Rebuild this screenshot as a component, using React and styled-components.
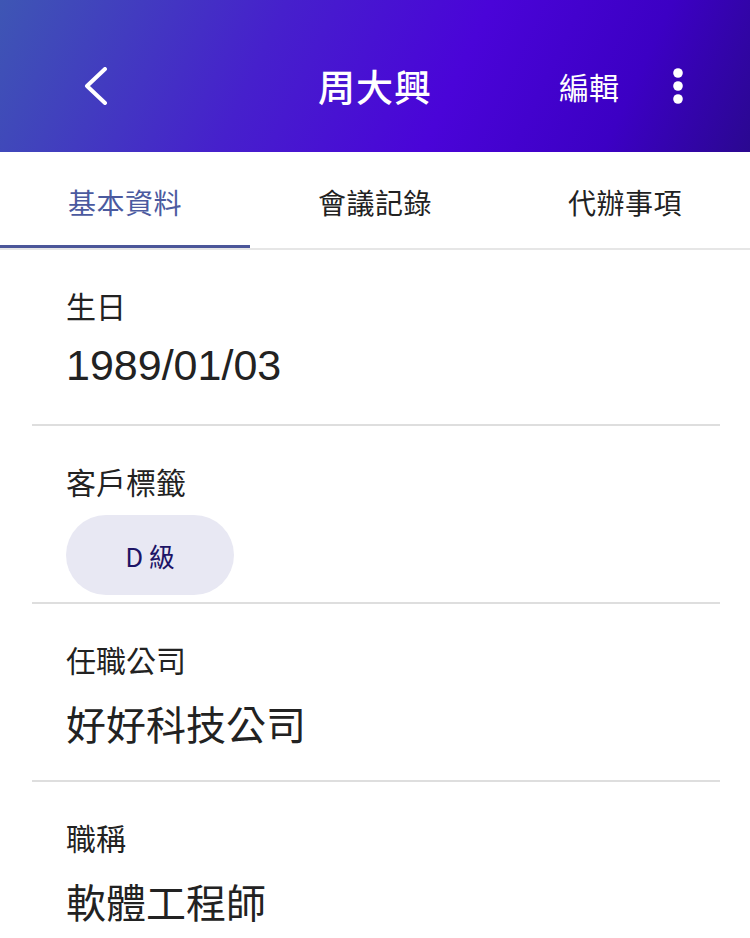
import React from "react";
import styled, { createGlobalStyle } from "styled-components";

const GlobalStyle = createGlobalStyle`
    body {
        margin: 0;
        background: #ffffff;
        font-family: "Noto Sans CJK TC", "Noto Sans", sans-serif;
        color: #222222;
    }
`;

const tabs = ["基本資料", "會議記錄", "代辦事項"];

const App = () => {
    return (
        <Page>
            <GlobalStyle />
            <Header>
                <HeaderLeft>
                    <IconButton aria-label="返回">
                        <svg width="24" height="38" viewBox="0 0 24 38">
                            <polyline points="21,2 3,19 21,36" fill="none" stroke="#ffffff" strokeWidth="4" strokeLinecap="round" strokeLinejoin="round" />
                        </svg>
                    </IconButton>
                </HeaderLeft>
                <Title>周大興</Title>
                <HeaderRight>
                    <EditButton>編輯</EditButton>
                    <IconButton aria-label="更多">
                        <svg width="10" height="36" viewBox="0 0 10 36">
                            <circle cx="5" cy="5" r="4.8" fill="#ffffff" />
                            <circle cx="5" cy="18" r="4.8" fill="#ffffff" />
                            <circle cx="5" cy="31" r="4.8" fill="#ffffff" />
                        </svg>
                    </IconButton>
                </HeaderRight>
            </Header>

            <TabBar>
                {tabs.map((t, i) => (
                    <Tab key={t} $active={i === 0}>{t}</Tab>
                ))}
            </TabBar>

            <Field>
                <Label>生日</Label>
                <Value $latin>1989/01/03</Value>
            </Field>
            <Field>
                <Label>客戶標籤</Label>
                <Chip>D 級</Chip>
            </Field>
            <Field>
                <Label>任職公司</Label>
                <Value>好好科技公司</Value>
            </Field>
            <Field>
                <Label>職稱</Label>
                <Value>軟體工程師</Value>
            </Field>
        </Page>
    );
};

export default App;

const Page = styled.div`
    width: 750px;
    min-height: 938px;
    background: #ffffff;
`;

/* 상단 헤더 */
const Header = styled.header`
    height: 152px;
    box-sizing: border-box;
    padding-top: 20px;
    display: grid;
    grid-template-columns: 1fr auto 1fr;
    align-items: center;
    background: linear-gradient(115deg, #3e56b4 0%, #4620cc 35%, #4a04d8 60%, #3c00c4 82%, #2a0890 100%);
    color: #ffffff;
`;

const HeaderLeft = styled.div`
    display: flex;
    align-items: center;
    padding-left: 84px;
`;

const HeaderRight = styled.div`
    display: flex;
    align-items: center;
    justify-content: flex-end;
    gap: 54px;
    padding-right: 67px;
`;

const IconButton = styled.button`
    display: flex;
    align-items: center;
    justify-content: center;
    padding: 0;
    border: none;
    background: transparent;
    cursor: pointer;
`;

const Title = styled.h1`
    margin: 0;
    font-size: 37px;
    font-weight: 500;
    line-height: 44px;
    letter-spacing: 1px;
`;

const EditButton = styled.button`
    padding: 0;
    border: none;
    background: transparent;
    color: #ffffff;
    font-family: "Noto Sans CJK TC", sans-serif;
    font-size: 30px;
    font-weight: 400;
    line-height: 36px;
    cursor: pointer;
`;

/* 탭 */
const TabBar = styled.nav`
    display: grid;
    grid-template-columns: repeat(3, 1fr);
    border-bottom: 2px solid #e6e6e6;
`;

const Tab = styled.div`
    height: 96px;
    display: flex;
    align-items: center;
    justify-content: center;
    padding-top: 4px;
    box-sizing: border-box;
    font-size: 28px;
    letter-spacing: 0.5px;
    color: ${(p) => (p.$active ? "#4b5a9f" : "#222222")};
    box-shadow: ${(p) => (p.$active ? "inset 0 -3px 0 #4b5699" : "none")};
`;

/* 항목 */
const Field = styled.section`
    margin: 0 30px 0 32px;
    padding: 37px 0 0 34px;
    border-bottom: 2px solid #dedede;
`;

const Label = styled.div`
    font-size: 30px;
    line-height: 36px;
    color: #222222;
`;

const Value = styled.div`
    font-family: ${(p) => (p.$latin ? '"Liberation Sans", "Noto Sans", sans-serif' : '"Noto Sans CJK TC", sans-serif')};
    font-size: ${(p) => (p.$latin ? "43px" : "40px")};
    font-weight: 400;
    line-height: 48px;
    margin: ${(p) => (p.$latin ? "18px 0 35px" : "22px 0 33px")};
    color: #222222;
`;

const Chip = styled.div`
    width: 168px;
    height: 80px;
    margin: 16px 0 7px;
    border-radius: 40px;
    background: #e8e8f3;
    color: #1d1466;
    display: flex;
    align-items: center;
    justify-content: center;
    font-size: 26px;
    font-weight: 400;
`;
